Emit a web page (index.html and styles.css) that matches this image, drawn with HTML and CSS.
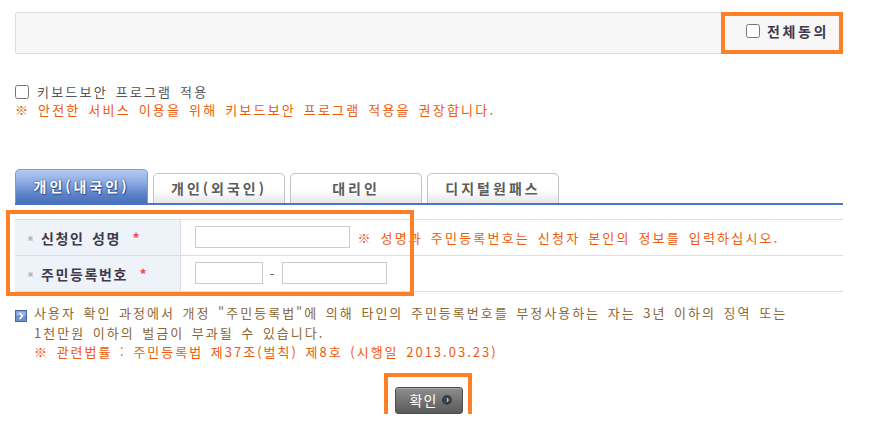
FILE: index.html
```html
<!DOCTYPE html>
<html lang="ko">
<head>
  <meta charset="UTF-8" />
  <title>본인확인</title>
  <meta name="viewport" content="width=device-width, initial-scale=1" />
  <link rel="stylesheet" href="styles.css">
</head>
<body>
  <div class="page">
    <div class="agree-box">
      <label class="agree-all"><input type="checkbox" /> 전체동의</label>
    </div>

    <div class="keyboard">
      <label class="keyboard-check"><input type="checkbox" /> 키보드보안 프로그램 적용</label>
      <p class="warn">※ 안전한 서비스 이용을 위해 키보드보안 프로그램 적용을 권장합니다.</p>
    </div>

    <ul class="tabs">
      <li class="tab active">개인(내국인)</li>
      <li class="tab">개인(외국인)</li>
      <li class="tab">대리인</li>
      <li class="tab">디지털원패스</li>
    </ul>

    <div class="form-area">
      <table class="form-table">
        <tr>
          <th><span class="bullet"></span>신청인 성명 <em>*</em></th>
          <td>
            <div class="field">
              <input type="text" class="input-name" />
              <span class="warn note">※ 성명과 주민등록번호는 신청자 본인의 정보를 입력하십시오.</span>
            </div>
          </td>
        </tr>
        <tr>
          <th><span class="bullet"></span>주민등록번호 <em>*</em></th>
          <td>
            <div class="field">
              <input type="text" class="input-jumin1" />
              <span class="dash">-</span>
              <input type="password" class="input-jumin2" />
            </div>
          </td>
        </tr>
      </table>
      <div class="mark mark-table"></div>
    </div>

    <div class="notice">
      <span class="notice-icon">
        <svg width="12" height="12" viewBox="0 0 12 12">
          <rect x="0.5" y="0.5" width="11" height="11" fill="#6f8fd0" stroke="#4a68a8" />
          <rect x="1.5" y="1.5" width="9" height="4" fill="#9db4e4" />
          <path d="M4.5 3 L7.5 6 L4.5 9" fill="none" stroke="#fff" stroke-width="1.6" />
        </svg>
      </span>
      <p>사용자 확인 과정에서 개정 "주민등록법"에 의해 타인의 주민등록번호를 부정사용하는 자는 3년 이하의 징역 또는<br>
        1천만원 이하의 벌금이 부과될 수 있습니다.<br>
        <span class="warn">※ 관련법률 : 주민등록법 제37조(벌칙) 제8호 (시행일 2013.03.23)</span></p>
    </div>

    <div class="btn-area">
      <div class="btn-wrap">
        <button type="button" class="btn-ok">확인 <span class="arrow">›</span></button>
        <div class="mark mark-btn"></div>
      </div>
    </div>
  </div>
</body>
</html>
```

FILE: styles.css
```css
* {
  box-sizing: border-box;
}
body {
  margin: 0;
  background: #fff;
  font-family: "Noto Sans CJK KR", "Noto Sans", sans-serif;
  font-size: 13px;
  letter-spacing: 2.2px;
  word-spacing: 2px;
  color: #555;
}
.page {
  width: 843px;
  padding: 12px 0 0 15px;
}
p {
  margin: 0;
}
input[type="checkbox"] {
  width: 14px;
  height: 14px;
  margin: 0;
}

/* 전체동의 */
.agree-box {
  height: 42px;
  border: 1px solid #ddd;
  border-radius: 2px;
  background: #f7f7f7;
  display: flex;
  justify-content: flex-end;
}
.agree-all {
  margin: -1px;
  width: 122px;
  border: 4px solid #ff7f27;
  display: flex;
  align-items: center;
  gap: 7px;
  padding: 0 0 4px 21px;
  font-size: 14px;
  font-weight: bold;
  color: #3f3a4c;
  letter-spacing: 2.6px;
}

/* 키보드보안 */
.keyboard {
  margin-top: 29px;
  line-height: 18px;
}
.keyboard-check {
  display: flex;
  align-items: center;
  gap: 8px;
}
.warn {
  color: #ee5a0a;
}

/* tabs */
.tabs {
  list-style: none;
  margin: 50px 0 0;
  padding: 0;
  display: flex;
  align-items: flex-end;
  gap: 4px;
  height: 36px;
  border-bottom: 2px solid #4a76c8;
}
.tab {
  width: 132px;
  height: 30px;
  border: 1px solid #c4c4c4;
  border-bottom: none;
  border-radius: 5px 5px 0 0;
  background: linear-gradient(#fff, #fff 55%, #e6e6e6);
  color: #5c5c5c;
  font-size: 14px;
  font-weight: bold;
  text-align: center;
  line-height: 29px;
  letter-spacing: 3px;
}
.tab.active {
  width: 133px;
  height: 34px;
  border: 1px solid #7c9ad6;
  border-bottom: none;
  background: linear-gradient(#b5cbef, #8fade4 35%, #5a81c8 75%, #4a70bb);
  color: #fff;
  line-height: 33px;
  text-shadow: 0 0 2px #2c4f92, 1px 1px 1px #2c4f92;
}
.tab + .tab:not(.active) {
  margin-left: 1px;
}

/* form table */
.form-area {
  position: relative;
  margin-top: 14px;
}
.form-table {
  width: 100%;
  border-collapse: collapse;
  border-top: 1px solid #ddd;
}
.form-table tr {
  height: 36px;
  border-bottom: 1px solid #ddd;
}
.form-table th {
  width: 165px;
  background: #eef3fa;
  border-right: 1px solid #ddd;
  text-align: left;
  padding: 0 0 0 13px;
  font-size: 14px;
  color: #3f3a4c;
  letter-spacing: 1.6px;
}
.bullet {
  display: inline-block;
  width: 5px;
  height: 5px;
  margin: 0 8px 3px 0;
  background: #bbb;
  border: 1px solid #d6d6d6;
  vertical-align: middle;
}
.form-table th em {
  font-style: normal;
  color: #f04a5a;
  margin-left: 4px;
}
.form-table td {
  padding: 0 0 1px 14px;
  white-space: nowrap;
}
.field {
  display: flex;
  align-items: center;
}
.form-table input {
  height: 22px;
  border: 1px solid #ccc;
  padding: 0 4px;
}
.input-name {
  width: 155px;
}
.input-jumin1 {
  width: 68px;
}
.input-jumin2 {
  width: 105px;
}
.dash {
  width: 19px;
  text-align: center;
  letter-spacing: 0;
  color: #555;
}
.note {
  margin-left: 8px;
}

/* annotation boxes */
.mark {
  position: absolute;
  border: 4px solid #ff7f27;
  pointer-events: none;
}
.mark-table {
  left: -9px;
  top: -9px;
  width: 408px;
  height: 86px;
}

/* notice */
.notice {
  margin-top: 11px;
  display: flex;
  gap: 7px;
  line-height: 19.5px;
  color: #8d6635;
  letter-spacing: 2px;
}
.notice-icon {
  padding-top: 4px;
}

/* button */
.btn-area {
  display: flex;
  justify-content: center;
  margin-top: 25px;
}
.btn-wrap {
  position: relative;
}
.btn-ok {
  width: 68px;
  height: 27px;
  border: 1px solid #4e4e4e;
  border-radius: 3px;
  background: linear-gradient(#8e8e8e, #737373 50%, #5a5a5a);
  color: #fff;
  font-family: inherit;
  font-size: 14px;
  letter-spacing: 1px;
  padding: 0 0 0 4px;
  display: flex;
  align-items: center;
  justify-content: center;
  gap: 5px;
  box-shadow: inset 0 1px 0 #a8a8a8;
}
.arrow {
  width: 10px;
  height: 10px;
  border-radius: 50%;
  background: #3e3e3e;
  font-size: 9px;
  line-height: 9px;
  text-align: center;
  letter-spacing: 0;
  font-weight: bold;
}
.mark-btn {
  left: -11px;
  top: -14px;
  width: 88px;
  height: 52px;
}
```
